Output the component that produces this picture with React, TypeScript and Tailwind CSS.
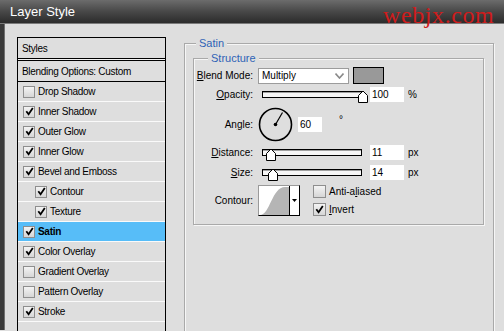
import React from "react";

const items = [
  { label: "Drop Shadow", on: false },
  { label: "Inner Shadow", on: true },
  { label: "Outer Glow", on: true },
  { label: "Inner Glow", on: true },
  { label: "Bevel and Emboss", on: true },
  { label: "Contour", on: true, sub: true },
  { label: "Texture", on: true, sub: true },
  { label: "Satin", on: true, active: true },
  { label: "Color Overlay", on: true },
  { label: "Gradient Overlay", on: false },
  { label: "Pattern Overlay", on: false },
  { label: "Stroke", on: true },
];

function Check({ on, big = false }: { on: boolean; big?: boolean }) {
  return (
    <span
      className={`flex shrink-0 items-center justify-center border border-[#8e8e8e] bg-gradient-to-b from-[#f4f4f4] to-[#d6d6d6] ${
        big ? "w-[13px] h-[13px]" : "w-[12px] h-[12px]"
      }`}
    >
      {on && (
        <svg width="9" height="9" viewBox="0 0 9 9">
          <path d="M1.3 4.2 L3.6 7.3 L7.8 1" fill="none" stroke="#000" strokeWidth="1.8" />
        </svg>
      )}
    </span>
  );
}

function Slider({ thumb }: { thumb: number }) {
  return (
    <div className="relative w-[100px] h-[7px] border border-black bg-[#f6f6f6] shadow-[inset_0_1px_0_#a0a0a0]">
      <svg className="absolute top-[-2px]" style={{ left: thumb }} width="10" height="13" viewBox="0 0 10 13">
        <path d="M0.5 12.5 V5.5 L5 1 L9.5 5.5 V12.5 Z" fill="#fff" stroke="#000" />
      </svg>
    </div>
  );
}

function Label({ children }: { children: React.ReactNode }) {
  return <span className="w-[59px] shrink-0 text-right">{children}</span>;
}

export default function App() {
  return (
    <div className="relative w-[504px] h-[331px] overflow-hidden bg-[#dedede] font-['Liberation_Sans',Arial,sans-serif] text-[10px] text-black">
      {/* title bar */}
      <div className="h-[24px] flex items-center pl-[10px] bg-gradient-to-b from-[#6c6c6c] via-[#484848] to-[#2c2c2c] border-b border-[#7a7a7a] text-white text-[13px]">
        Layer Style
      </div>
      <div className="absolute top-[3px] left-[383px] text-[24px] leading-none tracking-[0.6px] text-[#cf1c1c] font-['Liberation_Serif',serif]">
        webjx.com
      </div>

      <div className="flex h-[306px]">
        <div className="w-[5px] bg-[#3a3a3a] border-r border-[#707070]" />

        <div className="flex items-start pl-[12px] pt-[13px]">
          {/* styles list */}
          <div className="w-[149px] h-[300px] border-x border-t border-black flex flex-col tracking-[-0.3px]">
            <div className="h-[21px] flex items-center pl-[4px] border-b border-black">Styles</div>
            <div className="h-[1px] bg-[#f2f2f2]" />
            <div className="h-[22px] flex items-center pl-[4px] border-y border-black">
              Blending Options: Custom
            </div>
            {items.map((it) => (
              <div
                key={it.label}
                className={`h-[20px] flex items-center gap-[3px] border-b border-[#fafafa] ${
                  it.sub ? "pl-[17px]" : "pl-[5px]"
                } ${it.active ? "bg-[#57bdf8] font-bold" : ""}`}
              >
                <Check on={it.on} />
                <span>{it.label}</span>
              </div>
            ))}
          </div>

          {/* Satin group */}
          <div className="relative ml-[18px] mt-[6px] w-[310px] h-[300px] border border-[#a9a9a9] shadow-[inset_1px_1px_0_#f6f6f6,1px_1px_0_#f6f6f6] pl-[8px] pt-[14px]">
            <span className="absolute top-[-8px] left-[11px] px-[3px] bg-[#dedede] text-[11px] leading-[14px] text-[#2f63b6]">
              Satin
            </span>

            {/* Structure group */}
            <div className="relative w-[291px] border border-[#a9a9a9] shadow-[inset_1px_1px_0_#f6f6f6,1px_1px_0_#f6f6f6] pt-[7px] pb-[8px] flex flex-col">
              <span className="absolute top-[-8px] left-[14px] px-[3px] bg-[#dedede] text-[11px] leading-[14px] text-[#2f63b6]">
                Structure
              </span>

              <div className="h-[19px] flex items-center">
                <Label>
                  <span className="underline">B</span>lend Mode:
                </Label>
                <div className="ml-[5px] w-[91px] h-[16px] flex items-center justify-between bg-white border border-[#9c9c9c] pl-[3px] pr-[4px]">
                  <span>Multiply</span>
                  <svg width="9" height="6" viewBox="0 0 9 6">
                    <path d="M0.5 0.5 L4.5 5 L8.5 0.5" fill="none" stroke="#8a8a8a" strokeWidth="1.6" />
                  </svg>
                </div>
                <div className="ml-[4px] w-[31px] h-[17px] bg-[#999999] border border-black" />
              </div>

              <div className="h-[19px] flex items-center">
                <Label>
                  <span className="underline">O</span>pacity:
                </Label>
                <div className="ml-[9px]">
                  <Slider thumb={95} />
                </div>
                <div className="ml-[8px] w-[34px] h-[15px] bg-white flex items-center pl-[2px]">100</div>
                <span className="ml-[4px]">%</span>
              </div>

              <div className="mt-[2px] h-[36px] flex items-center">
                <Label>
                  An<span className="underline">g</span>le:
                </Label>
                <svg className="ml-[5px]" width="35" height="35" viewBox="0 0 35 35">
                  <circle cx="17.5" cy="17.5" r="16" fill="none" stroke="#000" strokeWidth="1.6" />
                  <line x1="17.5" y1="17.5" x2="24.5" y2="5.5" stroke="#000" strokeWidth="1.2" />
                  <circle cx="17.5" cy="17.5" r="1.8" fill="#000" />
                </svg>
                <div className="ml-[5px] w-[24px] h-[15px] bg-white flex items-center pl-[2px]">60</div>
                <span className="ml-[17px] self-start mt-[9px] leading-none">°</span>
              </div>

              <div className="mt-[1px] h-[19px] flex items-center">
                <Label>
                  <span className="underline">D</span>istance:
                </Label>
                <div className="ml-[9px]">
                  <Slider thumb={3} />
                </div>
                <div className="ml-[8px] w-[34px] h-[15px] bg-white flex items-center pl-[2px]">11</div>
                <span className="ml-[4px]">px</span>
              </div>

              <div className="h-[20px] flex items-center">
                <Label>
                  <span className="underline">S</span>ize:
                </Label>
                <div className="ml-[9px]">
                  <Slider thumb={5} />
                </div>
                <div className="ml-[8px] w-[34px] h-[15px] bg-white flex items-center pl-[2px]">14</div>
                <span className="ml-[4px]">px</span>
              </div>

              <div className="mt-[2px] h-[32px] flex items-center">
                <Label>Contour:</Label>
                <div className="ml-[5px] w-[42px] h-[31px] flex bg-white border-t border-l border-[#9a9a9a] border-r border-b border-r-black border-b-black">
                  <svg width="30" height="29" viewBox="0 0 30 29">
                    <path d="M1 29 C 11 29, 13 1, 26 1 L 30 1 L 30 29 Z" fill="#b5b5b5" />
                  </svg>
                  <div className="flex-1 border-l border-black flex items-center justify-center">
                    <svg width="5" height="3" viewBox="0 0 5 3">
                      <path d="M0 0 H5 L2.5 3 Z" fill="#000" />
                    </svg>
                  </div>
                </div>
                <div className="ml-[13px] flex flex-col gap-[3px]">
                  <div className="flex items-center gap-[3px]">
                    <Check on={false} big />
                    <span>
                      Anti-a<span className="underline">l</span>iased
                    </span>
                  </div>
                  <div className="flex items-center gap-[3px]">
                    <Check on big />
                    <span>
                      <span className="underline">I</span>nvert
                    </span>
                  </div>
                </div>
              </div>
            </div>
          </div>
        </div>
      </div>
    </div>
  );
}
